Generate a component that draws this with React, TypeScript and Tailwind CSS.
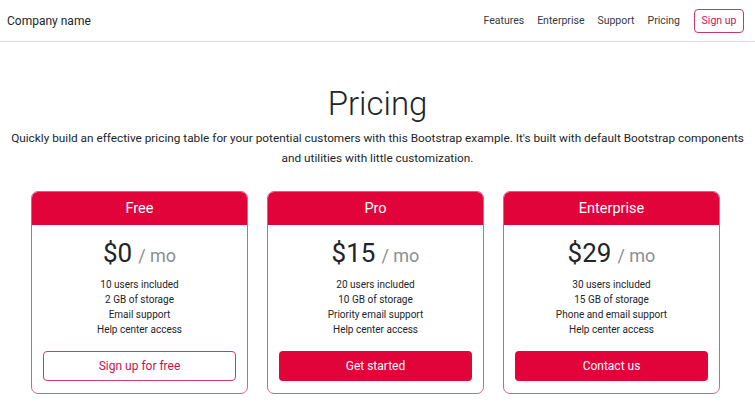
const plans = [
  {
    name: 'Free',
    price: '$0',
    features: ['10 users included', '2 GB of storage', 'Email support', 'Help center access'],
    cta: 'Sign up for free',
    outline: true,
  },
  {
    name: 'Pro',
    price: '$15',
    features: ['20 users included', '10 GB of storage', 'Priority email support', 'Help center access'],
    cta: 'Get started',
    outline: false,
  },
  {
    name: 'Enterprise',
    price: '$29',
    features: ['30 users included', '15 GB of storage', 'Phone and email support', 'Help center access'],
    cta: 'Contact us',
    outline: false,
  },
];

export default function App() {
  return (
    <div className="min-h-screen bg-white text-[#212529] font-['Roboto','Inter',sans-serif]">
      <header className="flex h-[42px] items-center justify-between border-b border-[#f1d3df] pl-[7px] pr-[11px]">
        <span className="text-[12px]">Company name</span>
        <nav className="flex items-center">
          <a className="mr-[13px] text-[10.5px] text-[#343a40]">Features</a>
          <a className="mr-[13px] text-[10.5px] text-[#343a40]">Enterprise</a>
          <a className="mr-[13px] text-[10.5px] text-[#343a40]">Support</a>
          <a className="mr-[14px] text-[10.5px] text-[#343a40]">Pricing</a>
          <button className="h-[24px] w-[50px] rounded-[4px] border border-[#c9376f] text-[10.5px] text-[#d0105a]">
            Sign up
          </button>
        </nav>
      </header>

      <section className="pt-[40px] text-center">
        <h1 className="text-[33px] leading-[44px] font-light">Pricing</h1>
        <p className="mx-auto mt-[2px] max-w-[745px] text-[11.8px] leading-[20px]">
          Quickly build an effective pricing table for your potential customers with this Bootstrap example. It's built
          with default Bootstrap components and utilities with little customization.
        </p>
      </section>

      <div className="ml-[31px] mt-[23px] grid w-[689px] grid-cols-3 gap-[19px]">
        {plans.map((p) => (
          <div key={p.name} className="overflow-hidden rounded-[7px] border border-[#d9608e] text-center">
            <div className="flex h-[33px] items-center justify-center bg-[#e2033b] text-[14.5px] text-white">
              {p.name}
            </div>
            <div className="px-[11px] pt-[11px] pb-[12px]">
              <div className="flex items-baseline justify-center leading-[34px]">
                <span className="text-[26px]">{p.price}</span>
                <span className="ml-[6px] text-[18px] text-[#8a8f94]">/ mo</span>
              </div>
              <ul className="mt-[4px] text-[10px] leading-[15px]">
                {p.features.map((f) => (
                  <li key={f}>{f}</li>
                ))}
              </ul>
              <button
                className={
                  p.outline
                    ? 'mt-[14px] h-[30px] w-full rounded-[4px] border border-[#d0386f] text-[12px] text-[#d50c4e]'
                    : 'mt-[14px] h-[30px] w-full rounded-[4px] bg-[#e2033b] text-[12px] text-white'
                }
              >
                {p.cta}
              </button>
            </div>
          </div>
        ))}
      </div>
    </div>
  );
}
